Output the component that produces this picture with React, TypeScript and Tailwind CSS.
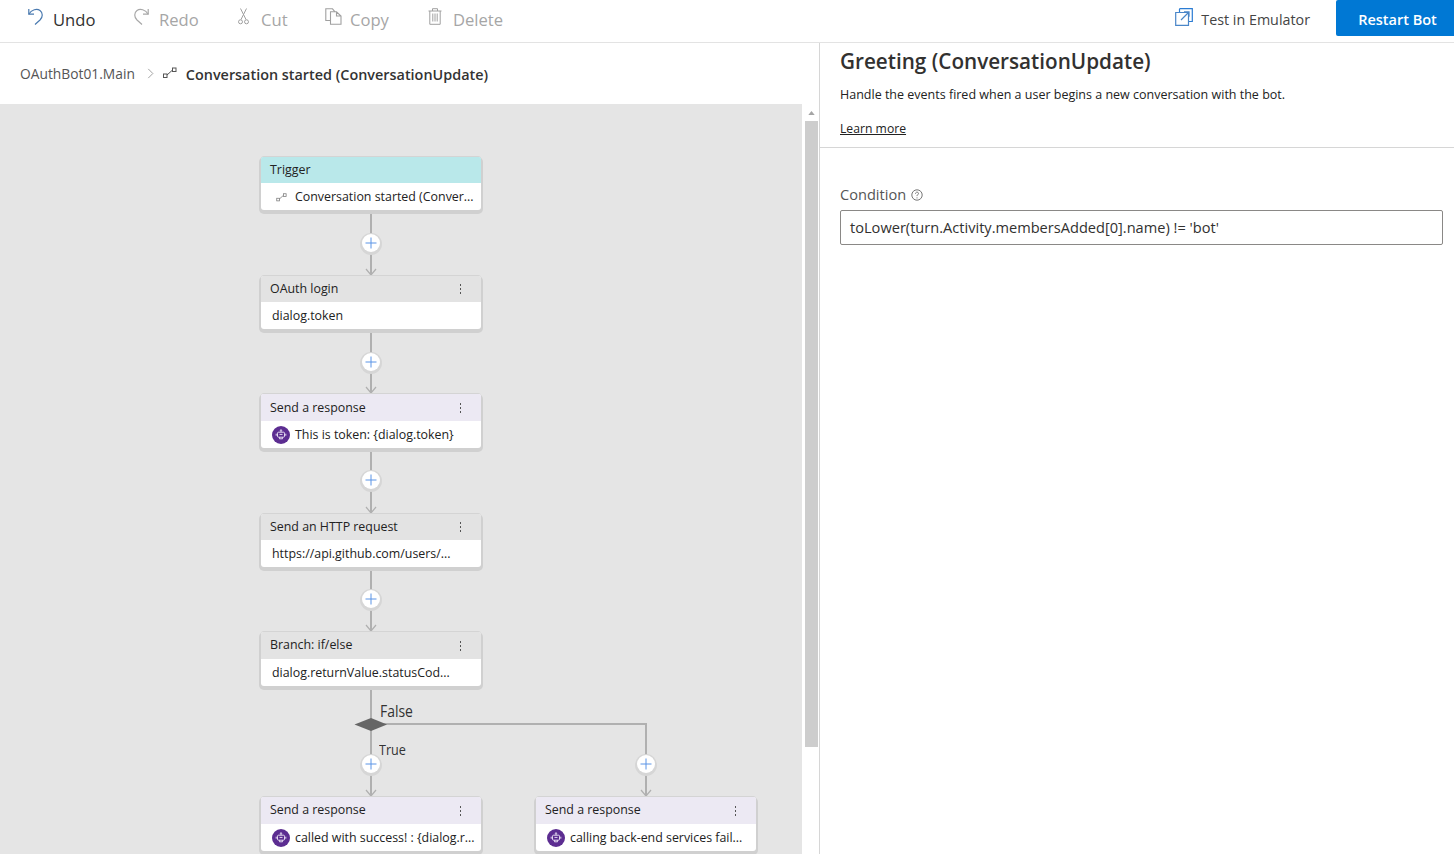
import React from "react";

const FONT = "font-['Open_Sans','Noto_Sans',sans-serif]";

type NodeData = {
  x: number;
  y: number;
  title: string;
  body: string;
  head: string;
  icon?: "trigger" | "bot";
  menu?: boolean;
  h?: number;
};

const nodes: NodeData[] = [
  { x: 261, y: 53, title: "Trigger", body: "Conversation started (Conver...", head: "bg-[#b9e8ea]", icon: "trigger", h: 26 },
  { x: 261, y: 172, title: "OAuth login", body: "dialog.token", head: "bg-[#e3e3e3]", menu: true, h: 26 },
  { x: 261, y: 290, title: "Send a response", body: "This is token: {dialog.token}", head: "bg-[#ece9f3] pt-[1px]", icon: "bot", menu: true, h: 27 },
  { x: 261, y: 410, title: "Send an HTTP request", body: "https://api.github.com/users/...", head: "bg-[#e3e3e3]", menu: true, h: 26 },
  { x: 261, y: 528, title: "Branch: if/else", body: "dialog.returnValue.statusCod...", head: "bg-[#e3e3e3]", menu: true, h: 27 },
  { x: 261, y: 693, title: "Send a response", body: "called with success! : {dialog.r...", head: "bg-[#ece9f3]", icon: "bot", menu: true, h: 27 },
  { x: 536, y: 693, title: "Send a response", body: "calling back-end services fail...", head: "bg-[#ece9f3]", icon: "bot", menu: true, h: 27 },
];

function TriggerGlyph({ className = "" }: { className?: string }) {
  return (
    <svg viewBox="0 0 16 12" className={className} fill="none" stroke="currentColor" strokeWidth="1">
      <rect x="1" y="7" width="3.5" height="3.5" />
      <path d="M4.5 8 L9.5 3.5" />
      <rect x="10" y="1" width="3.5" height="3.5" />
    </svg>
  );
}

function BotIcon() {
  return (
    <span className="flex h-[18px] w-[18px] shrink-0 items-center justify-center rounded-full bg-[#5c2d91]">
      <svg viewBox="0 0 12 12" className="h-[12px] w-[12px]" fill="none" stroke="#e4daf0" strokeWidth="1">
        <circle cx="6" cy="1.4" r="0.7" />
        <path d="M6 2.2v1" />
        <rect x="2.5" y="3.2" width="7" height="5" rx="1" />
        <path d="M4.5 5.4h3M1.2 4.7v2M10.8 4.7v2M4.5 8.2v1.6h3V8.2" />
      </svg>
    </span>
  );
}

function FlowNode({ n }: { n: NodeData }) {
  return (
    <div
      className="absolute w-[220px] rounded-[3px] bg-white shadow-[0_-1px_0_0_#d4d4d4,0_2px_0_2px_#d0d0d0]"
      style={{ left: n.x, top: n.y }}
    >
      <div
        className={`flex items-center justify-between rounded-t-[2px] pl-[9px] pr-[20px] text-[12.4px] text-[#222] ${n.head}`}
        style={{ height: n.h }}
      >
        <span>{n.title}</span>
        {n.menu && (
          <span className="flex flex-col gap-[2px]">
            <i className="block h-[2px] w-[1.5px] bg-[#555]" />
            <i className="block h-[2px] w-[1.5px] bg-[#555]" />
            <i className="block h-[2px] w-[1.5px] bg-[#555]" />
          </span>
        )}
      </div>
      <div className="flex h-[27px] items-center whitespace-nowrap pl-[11px] pt-[2px] text-[12.4px] text-[#222]">
        {n.icon === "bot" && (
          <span className="mb-[2px] mr-[5px]">
            <BotIcon />
          </span>
        )}
        {n.icon === "trigger" && (
          <span className="ml-[4px] mr-[7px] text-[#777]">
            <TriggerGlyph className="h-[9px] w-[12px]" />
          </span>
        )}
        <span>{n.body}</span>
      </div>
    </div>
  );
}

function Plus({ x, y }: { x: number; y: number }) {
  return (
    <div
      className="absolute flex h-[18px] w-[18px] items-center justify-center rounded-full bg-white shadow-[0_1px_0_2px_#d6d6d6]"
      style={{ left: x - 9, top: y - 9 }}
    >
      <svg viewBox="0 0 12 12" className="h-[12px] w-[12px]" fill="none" stroke="#5b94e6" strokeWidth="1">
        <path d="M0.5 6h11M6 0.5v11" />
      </svg>
    </div>
  );
}

function Edges() {
  const arrow = (x: number, y: number) => `M${x - 5} ${y - 6}L${x} ${y}L${x + 5} ${y - 6}`;
  return (
    <svg className="absolute left-0 top-0 h-[750px] w-[802px]" fill="none" stroke="#b0b0b0">
      <g strokeWidth="2">
        <path d="M371 106V172" />
        <path d="M371 224V290" />
        <path d="M371 343V410" />
        <path d="M371 462V528" />
        <path d="M371 580V693" />
        <path d="M371 620H646V693" />
      </g>
      <g strokeWidth="1.2">
        <path d={arrow(371, 171)} />
        <path d={arrow(371, 289)} />
        <path d={arrow(371, 409)} />
        <path d={arrow(371, 527)} />
        <path d={arrow(371, 692)} />
        <path d={arrow(646, 692)} />
      </g>
      <path d="M354.5 620.5L371 614L387 620.5L371 627Z" fill="#666" stroke="none" />
    </svg>
  );
}

function ToolItem({
  label,
  active,
  children,
  className,
}: {
  label: string;
  active?: boolean;
  children: React.ReactNode;
  className: string;
}) {
  return (
    <div className={`flex items-center ${className} ${active ? "text-[#323130]" : "text-[#a6a6a6]"}`}>
      {children}
      <span className="mt-[2px] text-[16.6px]">{label}</span>
    </div>
  );
}

export default function App() {
  return (
    <div className={`flex h-[854px] w-[1454px] flex-col overflow-hidden bg-white ${FONT}`}>
      <header className="flex h-[43px] shrink-0 items-start justify-between border-b border-[#e3e3e3]">
        <div className="flex h-[38px] items-center pl-[28px]">
          <ToolItem label="Undo" active className="w-[106px] gap-[10px]">
            <svg viewBox="0 0 15 17" className="mb-[4px] h-[17px] w-[15px]" fill="none" stroke="#4a7ab0" strokeWidth="1.2">
              <path d="M0.8 1v5.2H6" />
              <path d="M0.8 6.2C3.5 1.5 9 0.3 12 2.5s3 6.5 0 9.5l-5 4.5" />
            </svg>
          </ToolItem>
          <ToolItem label="Redo" className="w-[104px] gap-[10px]">
            <svg viewBox="0 0 15 17" className="mb-[4px] h-[17px] w-[15px]" fill="none" stroke="#a8a8a8" strokeWidth="1.2">
              <path d="M14.2 1v5.2H9" />
              <path d="M14.2 6.2C11.5 1.5 6 0.3 3 2.5s-3 6.5 0 9.5l5 4.5" />
            </svg>
          </ToolItem>
          <ToolItem label="Cut" className="w-[87px] gap-[12px]">
            <svg viewBox="0 0 11 17" className="mb-[4px] h-[17px] w-[11px]" fill="none" stroke="#a0a0a0" strokeWidth="1">
              <path d="M2.5 0.5L8 11.5M8.5 0.5L3 11.5" />
              <circle cx="2.5" cy="13.8" r="2" />
              <circle cx="8.5" cy="13.8" r="2" />
            </svg>
          </ToolItem>
          <ToolItem label="Copy" className="w-[103px] gap-[8px]">
            <svg viewBox="0 0 17 17" className="mb-[4px] h-[17px] w-[17px]" fill="none" stroke="#a0a0a0" strokeWidth="1.1">
              <path d="M5.5 12.5H0.8V0.8H7.5L10 3.8" />
              <path d="M5.5 3.8H11.5L16 8V16.2H5.5ZM11.5 3.8V8H16" />
            </svg>
          </ToolItem>
          <ToolItem label="Delete" className="gap-[11px]">
            <svg viewBox="0 0 14 17" className="mb-[4px] h-[17px] w-[14px]" fill="none" stroke="#a0a0a0" strokeWidth="1">
              <path d="M0.5 3h13M4.5 3V0.7h5V3M1.8 3v13.3h10.4V3M4.8 5.5v8M7 5.5v8M9.2 5.5v8" />
            </svg>
          </ToolItem>
        </div>
        <div className="flex items-center">
          <div className="mr-[26px] flex h-[36px] items-center gap-[8px]">
            <svg viewBox="0 0 18 18" className="mb-[3px] h-[18px] w-[18px]" fill="none" stroke="#2b7cd3" strokeWidth="1.2">
              <path d="M4.5 0.7H17.3V13.5H13.5" />
              <path d="M4.5 0.7V4.5" />
              <path d="M0.7 4.5H13.5V17.3H0.7Z" stroke="#4a86c8" />
              <path d="M6 12L13.5 4.5M9 3.8h5v5" stroke="#4a86c8" />
            </svg>
            <span className="mt-[4px] text-[14.3px] text-[#444]">Test in Emulator</span>
          </div>
          <button className="h-[36px] w-[118px] rounded-tl-[2px] rounded-bl-[2px] bg-[#0078d4] pl-[5px] pt-[3px] text-[14.5px] font-semibold text-white">
            Restart Bot
          </button>
        </div>
      </header>

      <div className="flex min-h-0 flex-1">
        <section className="flex w-[819px] shrink-0 flex-col">
          <div className="flex h-[61px] shrink-0 items-center pl-[20px] pt-[2px]">
            <span className="text-[13.8px] text-[#555]">OAuthBot01.Main</span>
            <svg viewBox="0 0 8 12" className="mb-[2px] ml-[12px] h-[11px] w-[8px]" fill="none" stroke="#999" strokeWidth="1">
              <path d="M1 1l5 5-5 5" />
            </svg>
            <TriggerGlyph className="mb-[4px] ml-[7px] h-[12px] w-[17px] text-[#555]" />
            <span className="ml-[7px] text-[14.4px] font-semibold text-[#333]">
              Conversation started (ConversationUpdate)
            </span>
          </div>
          <div className="flex min-h-0 flex-1">
            <div className="relative h-full w-[802px] overflow-hidden bg-[#e5e5e5]">
              <Edges />
              {nodes.map((n, i) => (
                <FlowNode key={i} n={n} />
              ))}
              <Plus x={371} y={139} />
              <Plus x={371} y={258} />
              <Plus x={371} y={376} />
              <Plus x={371} y={495} />
              <Plus x={371} y={660} />
              <Plus x={646} y={660} />
              <span className="absolute left-[380px] top-[596px] origin-left scale-x-[0.87] text-[16px] leading-[22px] text-[#333]">False</span>
              <span className="absolute left-[379px] top-[636px] origin-left scale-x-[0.87] text-[14.5px] leading-[20px] text-[#333]">True</span>
            </div>
            <div className="flex w-[17px] flex-col items-center pl-[1px]">
              <svg viewBox="0 0 8 5" className="mt-[7px] h-[4px] w-[7px]">
                <path d="M0 5L4 0L8 5Z" fill="#a5a5a5" />
              </svg>
              <div className="mt-[6px] h-[626px] w-[13px] bg-[#cdcdcd]" />
            </div>
          </div>
        </section>

        <aside className="flex min-w-0 flex-1 flex-col border-l border-[#d6d6d6]">
          <div className="h-[105px] shrink-0 border-b border-[#d6d6d6] pl-[20px]">
            <h1 className="mt-[3px] text-[20.7px] font-semibold leading-[30px] text-[#323130]">
              Greeting (ConversationUpdate)
            </h1>
            <p className="mt-[10px] text-[12.5px] leading-[18px] text-[#222]">
              Handle the events fired when a user begins a new conversation with the bot.
            </p>
            <a className="mt-[16px] block w-fit text-[12.2px] leading-[18px] text-[#222] underline">Learn more</a>
          </div>
          <div className="pl-[20px] pr-[11px] pt-[37px]">
            <div className="flex h-[20px] items-center gap-[5px] text-[14.6px] text-[#555]">
              Condition
              <svg viewBox="0 0 12 12" className="h-[12px] w-[12px]" fill="none" stroke="#666" strokeWidth="0.9">
                <circle cx="6" cy="6" r="5.2" />
                <path d="M4.5 4.7c0-2 3-2 3-.2 0 1-1.5 1.2-1.5 2.6M6 8.4v1" />
              </svg>
            </div>
            <div className="mt-[5px] flex h-[35px] items-center rounded-[2px] border border-[#8a8886] pl-[9px] pt-[1px] text-[14.6px] text-[#323130]">
              toLower(turn.Activity.membersAdded[0].name) != 'bot'
            </div>
          </div>
        </aside>
      </div>
    </div>
  );
}
